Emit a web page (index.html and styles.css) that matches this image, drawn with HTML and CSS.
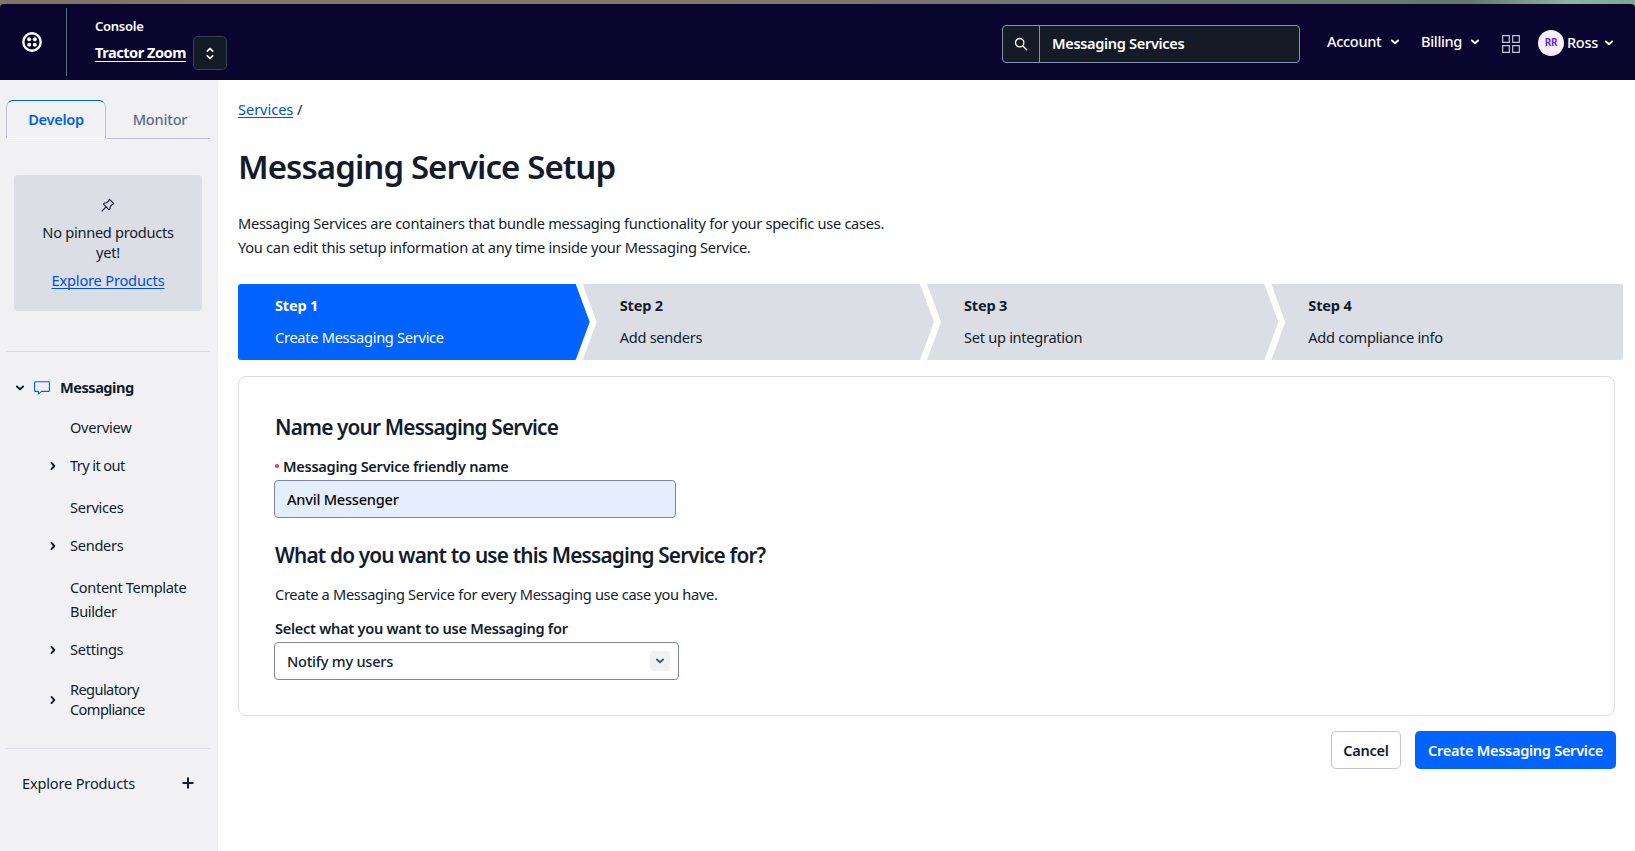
FILE: index.html
```html
<!DOCTYPE html>
<html lang="en">
<head>
<meta charset="utf-8">
<title>Messaging Service Setup</title>
<link rel="stylesheet" href="styles.css">
</head>
<body>
<svg width="0" height="0" class="defs">
  <symbol id="down" viewBox="0 0 10 6"><path d="M1.9 1.5 5 4.3 8.1 1.5" fill="none" stroke="currentColor" stroke-width="1.9" stroke-linecap="round" stroke-linejoin="round"/></symbol>
  <symbol id="right" viewBox="0 0 6 10"><path d="M1.5 1.9 4.3 5 1.5 8.1" fill="none" stroke="currentColor" stroke-width="1.9" stroke-linecap="round" stroke-linejoin="round"/></symbol>
</svg>
<div class="backdrop">
<header class="topbar">
  <div class="brand">
    <svg width="20" height="20" viewBox="0 0 20 20"><circle cx="10" cy="10" r="8.7" fill="none" stroke="#fff" stroke-width="2.4"/><g fill="#fff"><circle cx="7.2" cy="7.2" r="2.05"/><circle cx="12.8" cy="7.2" r="2.05"/><circle cx="7.2" cy="12.8" r="2.05"/><circle cx="12.8" cy="12.8" r="2.05"/></g></svg>
  </div>
  <div class="account">
    <div class="console">Console</div>
    <div class="account-row">
      <a class="account-name">Tractor Zoom</a>
      <button class="switcher"><svg width="8" height="13" viewBox="0 0 8 13"><path d="M1.3 4.2 4 1.5 6.7 4.2M1.3 8.8 4 11.5 6.7 8.8" fill="none" stroke="#fff" stroke-width="1.7" stroke-linecap="round" stroke-linejoin="round"/></svg></button>
    </div>
  </div>
  <div class="search">
    <div class="search-icon"><svg width="14" height="14" viewBox="0 0 14 14"><circle cx="5.7" cy="5.7" r="4.2" fill="none" stroke="#fff" stroke-width="1.3"/><path d="m8.9 8.9 3.8 3.8" stroke="#fff" stroke-width="1.4" stroke-linecap="round"/></svg></div>
    <div class="search-text">Messaging Services</div>
  </div>
  <nav class="menu">
    <span class="menu-item account-item">Account</span><svg class="chev" width="10" height="6"><use href="#down"/></svg>
    <span class="menu-item billing-item">Billing</span><svg class="chev" width="10" height="6"><use href="#down"/></svg>
    <svg class="apps" width="18" height="18" viewBox="0 0 18 18"><path d="M.7.7h6.6v6.6H.7zM10.7.7h6.6v6.6h-6.6zM.7 10.7h6.6v6.6H.7zM10.7 10.7h6.6v6.6h-6.6z" fill="none" stroke="#c5c6d2" stroke-width="1.2"/></svg>
    <span class="avatar">RR</span>
    <span class="menu-item user">Ross</span><svg class="chev chev-user" width="10" height="6"><use href="#down"/></svg>
  </nav>
</header>
</div>
<div class="layout">
<aside class="sidebar">
  <div class="tabs"><div class="tab active">Develop</div><div class="tab">Monitor</div></div>
  <div class="pinned">
    <svg width="14" height="14" viewBox="0 0 14 14"><path d="M8.3 1.2 12.8 5.7 11.4 6.2 9.2 8.6 9 10.8 7.9 11.6 2.5 6.2 3.4 5 5.6 4.8 7.8 2.6ZM5.1 8.9 1 13" fill="none" stroke="#121c2d" stroke-width="1.1" stroke-linejoin="round" stroke-linecap="round"/></svg>
    <p>No pinned products<br>yet!</p>
    <a>Explore Products</a>
  </div>
  <div class="group">
    <svg width="10" height="6"><use href="#down"/></svg>
    <svg class="bubble" width="16" height="14" viewBox="0 0 16 14"><path d="M1.3.7h13.4q.7 0 .7.7v8.3q0 .7-.7.7H7.6L4.4 13.1v-2.7H1.3q-.7 0-.7-.7V1.4q0-.7.7-.7Z" fill="none" stroke="#0263e0" stroke-width="1.1" stroke-linejoin="round"/></svg>
    <b>Messaging</b>
  </div>
  <ul class="nav">
    <li class="leaf">Overview</li>
    <li class="short"><svg width="6" height="10"><use href="#right"/></svg>Try it out</li>
    <li class="leaf tall">Services</li>
    <li><svg width="6" height="10"><use href="#right"/></svg>Senders</li>
    <li class="leaf double">Content Template<br>Builder</li>
    <li><svg width="6" height="10"><use href="#right"/></svg>Settings</li>
    <li class="compact"><svg width="6" height="10"><use href="#right"/></svg><span>Regulatory<br>Compliance</span></li>
  </ul>
  <div class="explore"><span>Explore Products</span><svg width="12" height="12" viewBox="0 0 12 12"><path d="M6 .5v11M.5 6h11" stroke="#121c2d" stroke-width="2"/></svg></div>
</aside>
<main class="main">
  <div class="crumbs"><a>Services</a> <span>/</span></div>
  <h1>Messaging Service Setup</h1>
  <p class="intro">Messaging Services are containers that bundle messaging functionality for your specific use cases.</p>
  <p class="intro second">You can edit this setup information at any time inside your Messaging Service.</p>
  <ol class="steps">
    <li class="current"><b>Step 1</b><span>Create Messaging Service</span></li>
    <li><b>Step 2</b><span>Add senders</span></li>
    <li><b>Step 3</b><span>Set up integration</span></li>
    <li><b>Step 4</b><span>Add compliance info</span></li>
  </ol>
  <section class="card">
    <h2 class="name-title">Name your Messaging Service</h2>
    <div class="label required"><i></i><span>Messaging Service friendly name</span></div>
    <div class="field filled">Anvil Messenger</div>
    <h2 class="use-title">What do you want to use this Messaging Service for?</h2>
    <p class="help">Create a Messaging Service for every Messaging use case you have.</p>
    <div class="label select-label">Select what you want to use Messaging for</div>
    <div class="field select"><span>Notify my users</span><span class="caret"><svg width="10" height="6"><use href="#down"/></svg></span></div>
  </section>
  <div class="actions"><button class="cancel">Cancel</button><button class="create">Create Messaging Service</button></div>
</main>
</div>
</body>
</html>
```

FILE: styles.css
```css
* { box-sizing: border-box; }
body {
  margin: 0; height: 851px; overflow: hidden; background: #fff; color: #121c2d;
  font: 14.6px/24px "Noto Sans", "Open Sans", sans-serif; letter-spacing: -0.28px;
}
h1, h2, p, ul, ol { margin: 0; padding: 0; font-weight: 600; }
p, ul, ol { font-weight: 400; }
li { list-style: none; }
button { font: inherit; letter-spacing: inherit; padding: 0; }
svg { display: block; flex: none; }
.defs { position: absolute; }

.backdrop { height: 80px; padding-top: 4px; background: linear-gradient(90deg, #7d7568, #85796a 30%, #77776c 60%, #65796f 90%, #8fb3a3 96%, #7fa594); }
.topbar { display: flex; height: 76px; background: #09052f; color: #fff; border-radius: 4px 4px 0 0; }
.brand { width: 67px; height: 68px; margin-top: 4px; padding: 24px 0 0 22px; border-right: 1px solid #606b85; }
.account { width: 935px; padding: 10px 0 0 28px; font-weight: 600; }
.console { height: 22px; font-size: 13px; line-height: 24px; letter-spacing: -0.25px; }
.account-row { display: flex; align-items: center; height: 34px; gap: 7px; }
.account-name { width: 91px; padding-bottom: 2px; font-weight: 700; font-size: 14.6px; letter-spacing: -0.5px; white-space: nowrap; text-decoration: underline; text-underline-offset: 3px; text-decoration-skip-ink: none; }
.switcher { display: flex; align-items: center; justify-content: center; width: 34px; height: 34px; background: #141b27; border: 1px solid #3a4058; border-radius: 5px; }
.search { display: flex; width: 298px; height: 38px; margin-top: 21px; background: #141b27; border: 1px solid #8891aa; border-radius: 4px; }
.search-icon { display: flex; align-items: center; justify-content: center; width: 37px; border-right: 1px solid #8891aa; }
.search-text { padding-left: 12px; line-height: 34px; font-weight: 600; letter-spacing: -0.35px; }
.menu { display: flex; align-items: center; height: 76px; padding-left: 27px; }
.menu-item { padding-bottom: 2px; font-weight: 500; letter-spacing: -0.35px; }
.account-item { width: 63px; }
.billing-item { width: 49px; margin-left: 21px; }
.apps { margin: 3px 0 0 22px; }
.avatar { width: 26px; height: 26px; margin: 2px 3px 0 18px; border-radius: 50%; background: #f5f0fc; color: #6d2ed1; font-size: 10px; font-weight: 700; line-height: 25px; text-align: center; }
.user { width: 37px; margin-top: 2px; }
.chev-user { margin-top: 2px; }

.layout { display: flex; height: 771px; }
.sidebar { width: 218px; padding: 20px 8px 0 6px; background: #f1f1f4; }
.tabs { display: flex; height: 39px; }
.tab { flex: 1; padding-left: 4px; border-bottom: 1px solid #c0c0d4; color: #606b85; font-weight: 500; line-height: 38px; text-align: center; letter-spacing: -0.2px; }
.tab.active { flex: 0 0 100px; padding: 0; border: 1px solid #c0c0d4; border-top: 1.5px solid #0263e0; border-bottom-color: #fff; border-radius: 7px 7px 0 0; color: #0263e0; font-weight: 600; line-height: 36px; letter-spacing: -0.3px; }
.pinned { display: flex; flex-direction: column; align-items: center; width: 188px; height: 136px; margin: 36px 0 0 8px; padding-top: 23px; border-radius: 4px; background: #dcdee6; line-height: 20px; text-align: center; }
.pinned p { margin-top: 10px; }
.pinned a { margin-top: 8px; letter-spacing: -0.18px; }
a { text-decoration: underline; text-underline-offset: 2px; text-decoration-skip-ink: none; }
.pinned a, .crumbs a { color: #0050db; }
.group { display: flex; align-items: center; height: 62px; margin-top: 40px; padding: 11px 0 0 9px; border-top: 1px solid #dcdde3; }
.group b { padding-bottom: 2px; letter-spacing: -0.5px; }
.bubble { margin: 0 10px 0 9px; }
.nav { padding-top: 3px; }
.nav li { display: flex; align-items: center; height: 36px; padding: 0 0 2px 44px; gap: 14px; }
.nav svg { margin-top: 2px; }
.nav .leaf { height: 24px; padding-left: 64px; margin-bottom: 8px; }
.nav .short { letter-spacing: -0.6px; }
.nav .tall { margin: 12px 0 8px; }
.nav .double { height: 48px; margin: 12px 0 8px; letter-spacing: -0.36px; }
.nav .compact { height: 40px; margin-top: 12px; line-height: 20px; letter-spacing: -0.6px; }
.explore { display: flex; align-items: center; justify-content: space-between; height: 71px; margin-top: 28px; padding: 0 16px 3px; border-top: 1px solid #dcdde8; letter-spacing: -0.18px; }

.main { flex: 1; padding: 17px 0 0 20px; }
.crumbs { letter-spacing: -0.05px; }
h1 { height: 44px; margin-top: 24px; font-size: 33px; line-height: 44px; letter-spacing: -0.92px; }
.intro { margin-top: 22px; }
.intro.second { margin-top: 0; }
.steps { display: flex; width: 1385px; margin-top: 25px; }
.steps li { display: flex; flex-direction: column; gap: 8px; width: 351.6px; height: 76px; margin-right: -7px; padding: 9px 0 0 37px; background: #dcdee6; clip-path: polygon(0 0, calc(100% - 14px) 0, 100% 50%, calc(100% - 14px) 100%, 0 100%, 14px 50%); }
.steps b { letter-spacing: -0.2px; }
.steps .current { width: 352px; background: #0263ff; color: #fff; border-radius: 3px 0 0 3px; clip-path: polygon(0 0, calc(100% - 14px) 0, 100% 50%, calc(100% - 14px) 100%, 0 100%); }
.steps li:last-child { width: 352px; margin-right: 0; border-radius: 0 2px 2px 0; clip-path: polygon(0 0, 100% 0, 100% 100%, 0 100%, 14px 50%); }
.card { width: 1377px; height: 340px; margin-top: 16px; padding: 35px 0 0 35px; border: 1px solid #dcdde8; border-radius: 8px; }
h2 { padding-left: 1px; font-size: 20.8px; line-height: 30px; letter-spacing: -0.83px; }
.label { padding-left: 1px; font-weight: 600; letter-spacing: -0.29px; }
.required { display: flex; align-items: center; margin-top: 12px; }
.required i { width: 4px; height: 4px; margin-right: 4px; border-radius: 50%; background: #eb3b4c; }
.field { display: flex; align-items: center; justify-content: space-between; width: 402px; height: 38px; padding: 0 8px 0 12px; border: 1px solid #7d84a3; border-radius: 4px; font-weight: 500; letter-spacing: -0.24px; }
.filled { margin-top: 2px; padding-bottom: 1px; background: #e5eeff; color: #060606; }
.use-title { margin-top: 22px; }
.help { margin-top: 12px; padding-left: 1px; letter-spacing: -0.3px; }
.select-label { margin-top: 10px; }
.select { width: 405px; margin-top: 2px; }
.select > span:first-child { padding-bottom: 1px; }
.caret { display: flex; align-items: center; justify-content: center; width: 20px; height: 20px; border-radius: 4px; background: #f1f1f4; color: #4b5671; }
.actions { display: flex; justify-content: flex-end; gap: 14px; width: 1378px; margin-top: 15px; }
.actions button { height: 38px; padding-bottom: 1px; border-radius: 5px; font-weight: 600; letter-spacing: -0.3px; }
.actions .cancel { width: 70px; border: 1px solid #c3c3d6; background: #fff; color: #121c2d; }
.actions .create { width: 201px; border: 0; background: #0263ff; color: #fff; }
```
